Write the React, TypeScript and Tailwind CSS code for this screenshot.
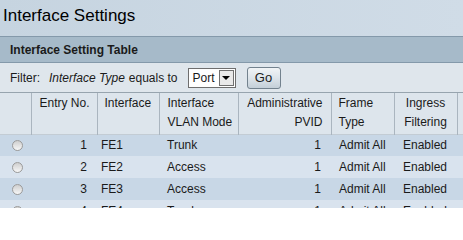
const rows = [
  { no: 1, port: "FE1", mode: "Trunk", pvid: 1, frame: "Admit All", ingress: "Enabled" },
  { no: 2, port: "FE2", mode: "Access", pvid: 1, frame: "Admit All", ingress: "Enabled" },
  { no: 3, port: "FE3", mode: "Access", pvid: 1, frame: "Admit All", ingress: "Enabled" },
  { no: 4, port: "FE4", mode: "Trunk", pvid: 1, frame: "Admit All", ingress: "Enabled" },
];

function Radio() {
  return (
    <span className="block w-[11px] h-[11px] rounded-full border border-[#9a9a9a] bg-gradient-to-b from-[#cfcfcf] to-[#f7f7f7]" />
  );
}

export default function App() {
  return (
    <div className="w-[463px] h-[208px] overflow-hidden bg-gradient-to-r from-[#c6d4e0] to-[#d0dce7] font-['Liberation_Sans',Arial,sans-serif] text-black">
      {/* Title */}
      <div className="h-[36px] pl-[3px] pt-[6px] text-[17px] leading-[20px]">
        Interface Settings
      </div>

      {/* Section bar */}
      <div className="h-[27px] border-y border-[#8499aa] bg-[#a6bac9] pl-[10px] flex items-center text-[12px] font-bold text-[#1a1a1a]">
        Interface Setting Table
      </div>

      {/* Filter row */}
      <div className="h-[30px] border-b border-[#97a4ae] bg-[#dfe6ec] flex items-center text-[12px] text-[#1a1a1a]">
        <span className="pl-[10px]">Filter:</span>
        <span className="pl-[9px] italic">Interface Type</span>
        <span className="pl-[4px]">equals to</span>
        <div className="ml-[10px] w-[48px] h-[20px] border border-[#6e6e6e] bg-white flex items-center">
          <span className="pl-[4px] flex-1">Port</span>
          <span className="w-[15px] h-[16px] mr-[1px] border border-[#707070] bg-[#e9e9e9] flex items-center justify-center">
            <span className="w-0 h-0 border-x-[4px] border-x-transparent border-t-[4px] border-t-black" />
          </span>
        </div>
        <button className="ml-[11px] w-[34px] h-[22px] rounded-[3px] border border-[#73828e] bg-gradient-to-b from-[#f1f4f6] via-[#dde4ea] to-[#c4cfd8] text-[13px] text-[#1a1a1a]">
          Go
        </button>
      </div>

      {/* Table */}
      <table className="table-fixed border-collapse w-[520px] text-[12px] text-[#1a1a1a]">
        <colgroup>
          <col className="w-[31px]" />
          <col className="w-[66px]" />
          <col className="w-[62px]" />
          <col className="w-[79px]" />
          <col className="w-[93px]" />
          <col className="w-[63px]" />
          <col className="w-[63px]" />
          <col className="w-[63px]" />
        </colgroup>
        <thead>
          <tr className="h-[41px] bg-[#dde5ec] border-b border-[#c3ccd4] align-top leading-[19px]">
            <th className="font-normal" />
            <th className="font-normal border-l border-[#aab5bf] text-right pr-[7px] pt-[1px]">Entry No.</th>
            <th className="font-normal border-l border-[#aab5bf] text-left pl-[7px] pt-[1px]">Interface</th>
            <th className="font-normal border-l border-[#aab5bf] text-left pl-[8px] pt-[1px]">
              Interface
              <br />
              VLAN Mode
            </th>
            <th className="font-normal border-l border-[#aab5bf] text-right pr-[8px] pt-[1px]">
              Administrative
              <br />
              PVID
            </th>
            <th className="font-normal border-l border-[#aab5bf] text-left pl-[7px] pt-[1px]">
              Frame
              <br />
              Type
            </th>
            <th className="font-normal border-l border-[#aab5bf] text-center pt-[1px]">
              Ingress
              <br />
              Filtering
            </th>
            <th className="font-normal border-l border-[#aab5bf]" />
          </tr>
        </thead>
        <tbody>
          {rows.map((r, i) => (
            <tr
              key={r.no}
              className={i % 2 === 0 ? "h-[22px] bg-[#c8d7e6]" : "h-[22px] bg-[#d9e3ee]"}
            >
              <td className="pl-[12px]">
                <Radio />
              </td>
              <td className="text-right pr-[10px]">{r.no}</td>
              <td className="pl-[4px]">{r.port}</td>
              <td className="pl-[8px]">{r.mode}</td>
              <td className="text-right pr-[10px]">{r.pvid}</td>
              <td className="pl-[8px]">{r.frame}</td>
              <td className="pl-[9px]">{r.ingress}</td>
              <td />
            </tr>
          ))}
        </tbody>
      </table>
    </div>
  );
}
